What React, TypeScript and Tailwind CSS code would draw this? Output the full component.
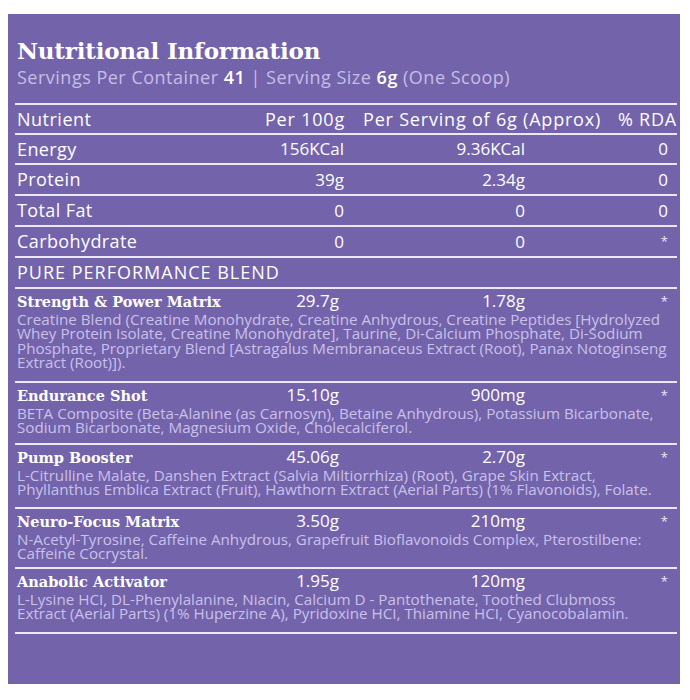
import type { ReactNode } from "react";

const basics = [
  { name: "Energy", per100: "156KCal", serving: "9.36KCal", rda: "0", h: "h-[30px]" },
  { name: "Protein", per100: "39g", serving: "2.34g", rda: "0", h: "h-[31px]" },
  { name: "Total Fat", per100: "0", serving: "0", rda: "0", h: "h-[31px]" },
  { name: "Carbohydrate", per100: "0", serving: "0", rda: "*", h: "h-[31px]" },
];

const blends = [
  {
    name: "Strength & Power Matrix",
    per100: "29.7g",
    serving: "1.78g",
    height: "h-[94px]",
    lines: [
      "Creatine Blend (Creatine Monohydrate, Creatine Anhydrous, Creatine Peptides [Hydrolyzed",
      "Whey Protein Isolate, Creatine Monohydrate], Taurine, Di-Calcium Phosphate, Di-Sodium",
      "Phosphate, Proprietary Blend [Astragalus Membranaceus Extract (Root), Panax Notoginseng",
      "Extract (Root)]).",
    ],
  },
  {
    name: "Endurance Shot",
    per100: "15.10g",
    serving: "900mg",
    height: "h-[62px]",
    lines: [
      "BETA Composite (Beta-Alanine (as Carnosyn), Betaine Anhydrous), Potassium Bicarbonate,",
      "Sodium Bicarbonate, Magnesium Oxide, Cholecalciferol.",
    ],
  },
  {
    name: "Pump Booster",
    per100: "45.06g",
    serving: "2.70g",
    height: "h-[64px]",
    lines: [
      "L-Citrulline Malate, Danshen Extract (Salvia Miltiorrhiza) (Root), Grape Skin Extract,",
      "Phyllanthus Emblica Extract (Fruit), Hawthorn Extract (Aerial Parts) (1% Flavonoids), Folate.",
    ],
  },
  {
    name: "Neuro-Focus Matrix",
    per100: "3.50g",
    serving: "210mg",
    height: "h-[60px]",
    lines: [
      "N-Acetyl-Tyrosine, Caffeine Anhydrous, Grapefruit Bioflavonoids Complex, Pterostilbene:",
      "Caffeine Cocrystal.",
    ],
  },
  {
    name: "Anabolic Activator",
    per100: "1.95g",
    serving: "120mg",
    height: "h-[65px]",
    lines: [
      "L-Lysine HCI, DL-Phenylalanine, Niacin, Calcium D - Pantothenate, Toothed Clubmoss",
      "Extract (Aerial Parts) (1% Huperzine A), Pyridoxine HCI, Thiamine HCI, Cyanocobalamin.",
    ],
  },
];

const sans = "font-['Open_Sans','Noto_Sans',sans-serif]";
const serif = "font-['DejaVu_Serif','Liberation_Serif',serif]";

const Star = () => (
  <span className="block text-[13px] leading-[13px] text-[#ece8f8]">*</span>
);

const Row = ({ h, children }: { h: string; children: ReactNode }) => (
  <div className={`grid ${h} grid-cols-[240px_89px_181px_1fr] items-center border-t-2 border-[#ebe7f5] text-[17px] text-white`}>
    {children}
  </div>
);

const NutritionPanel = () => {
  return (
    <div className="ml-2 mt-[14px] h-[670px] w-[672px] bg-[#7363ab] pl-[7px] pr-[3px]">
      <div className={`${serif} pl-[2px] pt-[22px] text-[23px] font-bold leading-[30px] tracking-[-0.2px] text-white`}>
        Nutritional Information
      </div>
      <div className={`${sans} pl-[2px] text-[18px] leading-[22px] tracking-[0.5px] text-[#c6bee6]`}>
        Servings Per Container <b className="font-semibold text-white">41</b> | Serving Size{" "}
        <b className="font-semibold text-white">6g</b> (One Scoop)
      </div>

      <div className={`${sans} mt-[15px]`}>
        <div className="grid h-[30px] grid-cols-[240px_90px_1fr_auto] items-center border-t-2 border-[#ebe7f5] text-[18px] tracking-[0.8px] text-white">
          <span className="pl-[2px] tracking-[0.5px]">Nutrient</span>
          <span className="text-right">Per 100g</span>
          <span className="pl-[18px]">Per Serving of 6g (Approx)</span>
          <span className="text-right">% RDA</span>
        </div>
        {basics.map((b) => (
          <Row key={b.name} h={b.h}>
            <span className="pl-[2px] text-[18px] tracking-[0.4px]">{b.name}</span>
            <span className="text-right">{b.per100}</span>
            <span className="text-right">{b.serving}</span>
            <span className="flex justify-end pr-[9px]">
              {b.rda === "*" ? <Star /> : b.rda}
            </span>
          </Row>
        ))}
        <div className="flex h-[31px] items-center border-t-2 border-[#ebe7f5] pl-[2px] text-[18px] tracking-[1px] text-white">
          PURE PERFORMANCE BLEND
        </div>

        {blends.map((b) => (
          <div key={b.name} className={`${b.height} border-t-2 border-[#ebe7f5]`}>
            <div className="grid h-[23px] grid-cols-[240px_89px_181px_1fr] items-baseline text-white">
              <span className={`${serif} pl-[2px] text-[14.5px] font-bold leading-[23px]`}>{b.name}</span>
              <span className="pr-[5px] text-right text-[17px] leading-[23px]">{b.per100}</span>
              <span className="text-right text-[17px] leading-[23px]">{b.serving}</span>
              <span className="flex justify-end self-start pr-[9px] pt-[6px]">
                <Star />
              </span>
            </div>
            <p className="whitespace-nowrap pl-[2px] text-[15.2px] leading-[14.3px] text-[#c9c1e9]">
              {b.lines.map((line, i) => (
                <span key={i} className="block">
                  {line}
                </span>
              ))}
            </p>
          </div>
        ))}
        <div className="border-t-2 border-[#ebe7f5]" />
      </div>
    </div>
  );
};

export default function App() {
  return (
    <div className="h-[700px] w-[690px] bg-white">
      <NutritionPanel />
    </div>
  );
}
